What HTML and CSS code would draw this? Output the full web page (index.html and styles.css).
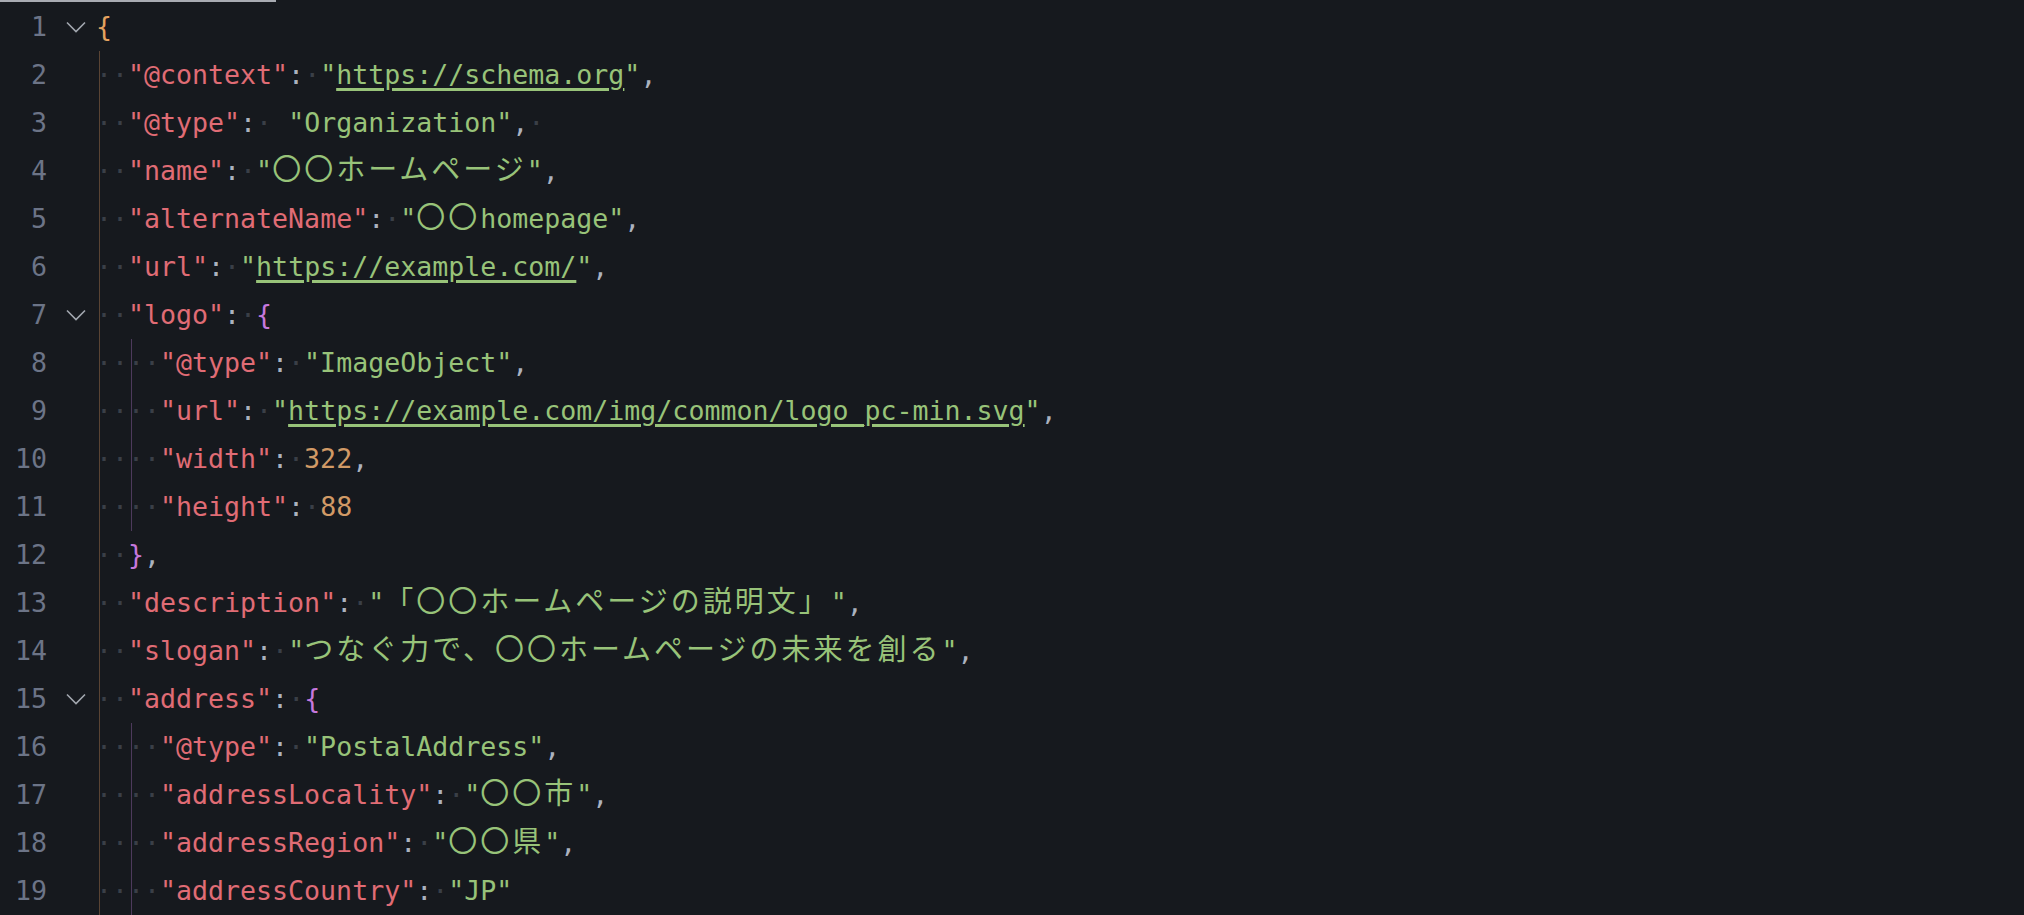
FILE: index.html
```html
<!DOCTYPE html>
<html lang="ja">
<head>
<meta charset="utf-8">
<title>JSON-LD</title>
<link rel="stylesheet" href="styles.css">
</head>
<body>
<div class="bar"></div>
<div class="editor">
  <div class="line"><span class="ln">1</span><span class="fold"><svg width="20" height="12" viewBox="0 0 20 12"><path d="M1 1.5 L10 10.5 L19 1.5" /></svg></span><span class="code"><span class="b1">{</span></span></div>
  <div class="line"><span class="ln">2</span><span class="fold"></span><span class="code"><span class="ind g1">··</span><span class="k">"@context"</span><span class="p">:</span><span class="ws">·</span><span class="s">"<span class="u">https://schema.org</span>"</span><span class="p">,</span></span></div>
  <div class="line"><span class="ln">3</span><span class="fold"></span><span class="code"><span class="ind g1">··</span><span class="k">"@type"</span><span class="p">:</span><span class="ws">·</span> <span class="s">"Organization"</span><span class="p">,</span><span class="ws">·</span></span></div>
  <div class="line"><span class="ln">4</span><span class="fold"></span><span class="code"><span class="ind g1">··</span><span class="k">"name"</span><span class="p">:</span><span class="ws">·</span><span class="s">"<span class="j">〇〇ホームページ</span>"</span><span class="p">,</span></span></div>
  <div class="line"><span class="ln">5</span><span class="fold"></span><span class="code"><span class="ind g1">··</span><span class="k">"alternateName"</span><span class="p">:</span><span class="ws">·</span><span class="s">"<span class="j">〇〇</span>homepage"</span><span class="p">,</span></span></div>
  <div class="line"><span class="ln">6</span><span class="fold"></span><span class="code"><span class="ind g1">··</span><span class="k">"url"</span><span class="p">:</span><span class="ws">·</span><span class="s">"<span class="u">https://example.com/</span>"</span><span class="p">,</span></span></div>
  <div class="line"><span class="ln">7</span><span class="fold"><svg width="20" height="12" viewBox="0 0 20 12"><path d="M1 1.5 L10 10.5 L19 1.5" /></svg></span><span class="code"><span class="ind g1">··</span><span class="k">"logo"</span><span class="p">:</span><span class="ws">·</span><span class="b2">{</span></span></div>
  <div class="line"><span class="ln">8</span><span class="fold"></span><span class="code"><span class="ind g1">··</span><span class="ind g2">··</span><span class="k">"@type"</span><span class="p">:</span><span class="ws">·</span><span class="s">"ImageObject"</span><span class="p">,</span></span></div>
  <div class="line"><span class="ln">9</span><span class="fold"></span><span class="code"><span class="ind g1">··</span><span class="ind g2">··</span><span class="k">"url"</span><span class="p">:</span><span class="ws">·</span><span class="s">"<span class="u">https://example.com/img/common/logo_pc-min.svg</span>"</span><span class="p">,</span></span></div>
  <div class="line"><span class="ln">10</span><span class="fold"></span><span class="code"><span class="ind g1">··</span><span class="ind g2">··</span><span class="k">"width"</span><span class="p">:</span><span class="ws">·</span><span class="n">322</span><span class="p">,</span></span></div>
  <div class="line"><span class="ln">11</span><span class="fold"></span><span class="code"><span class="ind g1">··</span><span class="ind g2">··</span><span class="k">"height"</span><span class="p">:</span><span class="ws">·</span><span class="n">88</span></span></div>
  <div class="line"><span class="ln">12</span><span class="fold"></span><span class="code"><span class="ind g1">··</span><span class="b2">}</span><span class="p">,</span></span></div>
  <div class="line"><span class="ln">13</span><span class="fold"></span><span class="code"><span class="ind g1">··</span><span class="k">"description"</span><span class="p">:</span><span class="ws">·</span><span class="s">"<span class="j">「〇〇ホームページの説明文」</span>"</span><span class="p">,</span></span></div>
  <div class="line"><span class="ln">14</span><span class="fold"></span><span class="code"><span class="ind g1">··</span><span class="k">"slogan"</span><span class="p">:</span><span class="ws">·</span><span class="s">"<span class="j">つなぐ力で、〇〇ホームページの未来を創る</span>"</span><span class="p">,</span></span></div>
  <div class="line"><span class="ln">15</span><span class="fold"><svg width="20" height="12" viewBox="0 0 20 12"><path d="M1 1.5 L10 10.5 L19 1.5" /></svg></span><span class="code"><span class="ind g1">··</span><span class="k">"address"</span><span class="p">:</span><span class="ws">·</span><span class="b2">{</span></span></div>
  <div class="line"><span class="ln">16</span><span class="fold"></span><span class="code"><span class="ind g1">··</span><span class="ind g2">··</span><span class="k">"@type"</span><span class="p">:</span><span class="ws">·</span><span class="s">"PostalAddress"</span><span class="p">,</span></span></div>
  <div class="line"><span class="ln">17</span><span class="fold"></span><span class="code"><span class="ind g1">··</span><span class="ind g2">··</span><span class="k">"addressLocality"</span><span class="p">:</span><span class="ws">·</span><span class="s">"<span class="j">〇〇市</span>"</span><span class="p">,</span></span></div>
  <div class="line"><span class="ln">18</span><span class="fold"></span><span class="code"><span class="ind g1">··</span><span class="ind g2">··</span><span class="k">"addressRegion"</span><span class="p">:</span><span class="ws">·</span><span class="s">"<span class="j">〇〇県</span>"</span><span class="p">,</span></span></div>
  <div class="line"><span class="ln">19</span><span class="fold"></span><span class="code"><span class="ind g1">··</span><span class="ind g2">··</span><span class="k">"addressCountry"</span><span class="p">:</span><span class="ws">·</span><span class="s">"JP"</span></span></div>
</div>
</body>
</html>
```
FILE: styles.css
```css
html, body {
  margin: 0;
  padding: 0;
  background: #16191e;
  overflow: hidden;
}
body {
  width: 2024px;
  height: 915px;
  font-family: "DejaVu Sans Mono", "Noto Sans CJK JP", monospace;
  font-size: 26.6px;
  color: #abb2bf;
}
.bar {
  width: 276px;
  height: 2px;
  background: #a8abb2;
}
.editor {
  padding-top: 1px;
}
.line {
  display: flex;
  height: 48px;
  line-height: 48px;
}
.ln {
  flex: none;
  width: 47px;
  text-align: right;
  color: #6c7487;
}
.fold {
  flex: none;
  width: 40px;
  margin-left: 9px;
  display: flex;
  align-items: center;
  justify-content: center;
}
.fold svg {
  display: block;
}
.fold path {
  fill: none;
  stroke: #a2a7af;
  stroke-width: 1.6;
}
.code {
  flex: none;
  white-space: pre;
}
.ind {
  display: inline-block;
  width: 32px;
  height: 48px;
  vertical-align: top;
  color: #3a3f47;
  background-repeat: no-repeat;
}
.g1 {
  background-image: linear-gradient(to right, transparent 3px, #5a4434 3px, #5a4434 4px, transparent 4px);
}
.g2 {
  background-image: linear-gradient(to right, transparent 3px, #4d3a5c 3px, #4d3a5c 4px, transparent 4px);
}
.ws {
  color: #3a3f47;
}
.k {
  color: #e06c75;
}
.s {
  color: #98c379;
}
.n {
  color: #d19a66;
}
.p {
  color: #abb2bf;
}
.b1 {
  color: #e5a25f;
}
.b2 {
  color: #c678dd;
}
.u {
  text-decoration: underline;
  text-decoration-thickness: 3px;
  text-underline-offset: 4px;
}
.j {
  font-family: "Noto Sans CJK JP", sans-serif;
  font-size: 29px;
  letter-spacing: 3px;
  line-height: 1;
}
```
